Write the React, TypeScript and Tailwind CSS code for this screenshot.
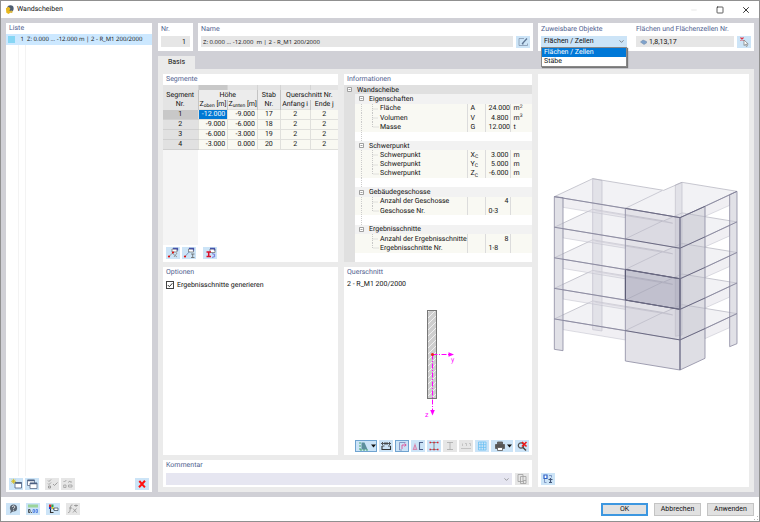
import { useState } from "react";
import type { ReactNode } from "react";
import { ChevronDown, Minus, Square, X } from "lucide-react";

interface Segment {
  nr: number;
  top: string;
  bottom: string;
  member: number;
}

interface InfoRow {
  kind: "root" | "group" | "item" | "gap";
  label?: string;
  symbol?: ReactNode;
  value?: string;
  left?: boolean;
  unit?: ReactNode;
  last?: boolean;
}

const SEGMENTS: Segment[] = [
  { nr: 1, top: "-12.000", bottom: "-9.000", member: 17 },
  { nr: 2, top: "-9.000", bottom: "-6.000", member: 18 },
  { nr: 3, top: "-6.000", bottom: "-3.000", member: 19 },
  { nr: 4, top: "-3.000", bottom: "0.000", member: 20 },
];

const sub = (base: string, index: string) => (
  <>
    {base}
    <sub className="text-[5px]">{index}</sub>
  </>
);

const sup = (base: string, index: string) => (
  <>
    {base}
    <sup className="text-[5px]">{index}</sup>
  </>
);

const INFO: InfoRow[] = [
  { kind: "root", label: "Wandscheibe" },
  { kind: "group", label: "Eigenschaften" },
  { kind: "item", label: "Fläche", symbol: "A", value: "24.000", unit: sup("m", "2") },
  { kind: "item", label: "Volumen", symbol: "V", value: "4.800", unit: sup("m", "3") },
  { kind: "item", label: "Masse", symbol: "G", value: "12.000", unit: "t", last: true },
  { kind: "gap" },
  { kind: "group", label: "Schwerpunkt" },
  { kind: "item", label: "Schwerpunkt", symbol: sub("X", "C"), value: "3.000", unit: "m" },
  { kind: "item", label: "Schwerpunkt", symbol: sub("Y", "C"), value: "5.000", unit: "m" },
  { kind: "item", label: "Schwerpunkt", symbol: sub("Z", "C"), value: "-6.000", unit: "m", last: true },
  { kind: "gap" },
  { kind: "group", label: "Gebäudegeschosse" },
  { kind: "item", label: "Anzahl der Geschosse", value: "4" },
  { kind: "item", label: "Geschosse Nr.", value: "0-3", left: true, last: true },
  { kind: "gap" },
  { kind: "group", label: "Ergebnisschnitte" },
  { kind: "item", label: "Anzahl der Ergebnisschnitte", value: "8" },
  { kind: "item", label: "Ergebnisschnitte Nr.", value: "1-8", left: true, last: true },
  { kind: "gap" },
];

const BLUE = "bg-[#cce4f7]";
const GREY = "bg-[#e6e6e6]";

function Tool({ label, off, wide, active, children }: {
  label: string;
  off?: boolean;
  wide?: boolean;
  active?: boolean;
  children: ReactNode;
}) {
  return (
    <button
      type="button"
      aria-label={label}
      disabled={off}
      className={`flex h-3 shrink-0 items-center justify-center ${wide ? "w-[22px]" : "w-[14px]"} ${off ? GREY : BLUE} ${
        active ? "border border-[#6fa3d0]" : ""
      }`}
    >
      <svg viewBox="0 0 14 12" className="h-3 w-[14px] shrink-0" fill="none" stroke="#444" strokeWidth="0.8">
        {children}
      </svg>
      {wide && (
        <svg viewBox="0 0 5 4" className="h-1 w-[5px] shrink-0">
          <path d="M0 0.500h5L2.500 3.500z" fill="#111" />
        </svg>
      )}
    </button>
  );
}

function Title({ children, htmlFor }: { children: ReactNode; htmlFor?: string }) {
  const style = "block h-[11px] px-[3px] leading-[11px] text-[#50618f]";
  return htmlFor ? (
    <label htmlFor={htmlFor} className={style}>{children}</label>
  ) : (
    <h2 className={style}>{children}</h2>
  );
}

function ObjectList() {
  return (
    <section className="flex w-[146px] shrink-0 flex-col bg-white">
      <Title>Liste</Title>
      <div className="flex h-[11px] items-center bg-[#cce8ff] font-['Open_Sans',sans-serif] text-[6px]">
        <span className="ml-[2px] size-[7px] shrink-0 bg-[#86d6f4]" />
        <span className="w-[9px] shrink-0 text-right">1</span>
        <span className="ml-[3px] whitespace-nowrap">Z: 0.000 ... -12.000 m | 2 - R_M1 200/2000</span>
      </div>
      <div className="grid flex-1 grid-cols-[13px_7px_1fr]">
        <span className="border-r border-[#f3f3f3]" />
        <span className="border-r border-[#f3f3f3]" />
      </div>
      <div className="flex gap-[2px] px-[3px] pt-[2px] pb-[2px]">
        <Tool label="Neu">
          <path d="M6 4.500h6.500v5.500h-6.500z" fill="#fff" stroke="#4c6083" />
          <path d="M6 5h6.500" stroke="#4c6083" strokeWidth="1.600" />
          <path d="M4.500 0.800v5M2 3.300h5M2.700 1.500l3.600 3.600M6.300 1.500l-3.600 3.600" stroke="#d6bd1c" />
        </Tool>
        <Tool label="Kopieren">
          <path d="M2.500 2h7v5.500h-7z" fill="#fff" stroke="#5b6d8c" />
          <path d="M2.500 2.500h7" stroke="#4c6083" strokeWidth="1.500" />
          <path d="M5 5h7v5.500h-7z" fill="#fff" stroke="#5b6d8c" />
          <path d="M5 5.500h7" stroke="#4c6083" strokeWidth="1.500" />
        </Tool>
        <span className="w-[2px]" />
        <Tool label="Alle auswählen" off>
          <path d="M3 2.500l1 1 2-2M3 5.500l1 1 2-2M3.500 8h2v2h-2zM8 6l1.500 1.500 3-3" stroke="#8d8d8d" />
        </Tool>
        <Tool label="Auswahl umkehren" off>
          <path d="M2.500 3l1 1 1.800-2M2.700 7h2.300v2.500h-2.300zM7 4.500l2-1.500v1h2M7.500 7h3.500v2h-3.500z" stroke="#a0a0a0" />
        </Tool>
        <span className="flex-1" />
        <Tool label="Löschen">
          <path d="M4.300 3l5.600 6.300M10 2.800l-6 6.500" stroke="#ff1010" strokeWidth="2" />
        </Tool>
      </div>
    </section>
  );
}

function SegmentPanel() {
  return (
    <section className="flex h-[188px] flex-col bg-white">
      <Title>Segmente</Title>
      <table className="h-[61px] w-full table-fixed border-collapse text-center leading-[9px]">
        <colgroup>
          <col className="w-[20%]" />
          <col className="w-[17%]" />
          <col className="w-[17%]" />
          <col className="w-[13%]" />
          <col className="w-[17%]" />
          <col className="w-[16%]" />
        </colgroup>
        <thead className="bg-[#ececec]">
          <tr className="h-[5px] leading-[4px]">
            <td className="bg-[#e4e4e4]" />
            <td className="border border-y-0 border-[#d4d4d4] bg-[#c8c8c8]" />
            <td className="border-r border-[#d4d4d4] bg-[#e4e4e4]" />
            <td className="border-r border-[#d4d4d4] bg-[#e4e4e4]" />
            <td className="border-r border-[#d4d4d4] bg-[#e4e4e4]" />
            <td className="bg-[#e4e4e4]" />
          </tr>
          <tr className="h-[10px]">
            <th rowSpan={2} className="bg-[#e4e4e4] p-0 font-normal">Segment<br />Nr.</th>
            <th colSpan={2} className="border-x border-[#c4c4c4] p-0 font-normal">Höhe</th>
            <th className="border-r border-[#c4c4c4] p-0 font-normal">Stab</th>
            <th colSpan={2} className="p-0 font-normal">Querschnitt Nr.</th>
          </tr>
          <tr className="h-[9px] whitespace-nowrap">
            <th className="border-x border-[#c4c4c4] p-0 font-normal">
              <span className="block h-[9px]">{sub("Z", "oben")} [m]</span>
            </th>
            <th className="border-r border-[#c4c4c4] p-0 font-normal">
              <span className="block h-[9px]">{sub("Z", "unten")} [m]</span>
            </th>
            <th className="border-r border-[#c4c4c4] p-0 font-normal">Nr.</th>
            <th className="border-r border-[#c4c4c4] p-0 font-normal">Anfang i</th>
            <th className="p-0 font-normal">Ende j</th>
          </tr>
        </thead>
        <tbody className="bg-[#f9f9f2]">
          {SEGMENTS.map((s, i) => (
            <tr key={s.nr} className="h-[9px]">
              <td className={`border-b border-[#d0d0d0] p-0 ${i === 0 ? "bg-[#c8c8c8]" : "bg-[#e1e1e1]"}`}>{s.nr}</td>
              <td className={`border border-[#e0e0dc] p-0 pr-[2px] text-right ${i === 0 ? "bg-[#0078d4] text-white" : ""}`}>
                {s.top}
              </td>
              <td className="border border-[#e0e0dc] p-0 pr-[2px] text-right">{s.bottom}</td>
              <td className="border border-[#e0e0dc] p-0">{s.member}</td>
              <td className="border border-[#e0e0dc] p-0">2</td>
              <td className="border-b border-[#e0e0dc] p-0">2</td>
            </tr>
          ))}
        </tbody>
      </table>
      <div className="w-1/5 flex-1 bg-[#f5f5f5]" />
      <div className="flex gap-[2px] px-[3px] pt-[2px] pb-[3px]">
        <Tool label="Segment wählen">
          <path d="M6 2h5v3h-5z" fill="#fff" stroke="#777" />
          <path d="M7 1.500h4.500v2" stroke="#4552a8" strokeWidth="1.300" />
          <path d="M3 9.500l5-5M6 6l5 4M11 6l-3 4" stroke="#888" />
          <circle cx="3" cy="9.500" r="1.100" fill="#d11" stroke="none" />
          <circle cx="7" cy="5.500" r="1.100" fill="#d11" stroke="none" />
        </Tool>
        <Tool label="Querschnitt wählen">
          <path d="M6.500 2h5v3h-5z" fill="#fff" stroke="#777" />
          <path d="M7 1.500h4.500v2" stroke="#4552a8" strokeWidth="1.300" />
          <path d="M3 9.500l4.500-5" stroke="#6a87b0" />
          <circle cx="3" cy="9.500" r="1.100" fill="#d11" stroke="none" />
          <path d="M9 7h3.500M9 10.500h3.500M10.700 7v3.500" stroke="#666" />
        </Tool>
        <span className="w-[3px]" />
        <Tool label="Querschnitt zuordnen">
          <path d="M7 2h5v3.500h-5z" fill="#fff" stroke="#777" />
          <path d="M7 1.500h4.500v2" stroke="#4552a8" strokeWidth="1.300" />
          <path d="M3.500 5h4.500M3.500 9.500h4.500M5.700 5v4.500" stroke="#d8102c" strokeWidth="1.500" />
          <path d="M9 6.500l2.500 1v2l-2.500 1" stroke="#7f86e0" strokeWidth="1.300" />
        </Tool>
      </div>
    </section>
  );
}

function Expander() {
  return (
    <svg viewBox="0 0 5 5" className="size-[5px] bg-white">
      <path d="M0.500 0.500h4v4h-4zM1.500 2.500h2" fill="none" stroke="#777" strokeWidth="0.700" />
    </svg>
  );
}

function InfoPanel() {
  return (
    <section className="h-[188px] bg-white">
      <Title>Informationen</Title>
      <table className="h-[177px] w-full table-fixed border-collapse leading-[8px]">
        <colgroup>
          <col className="w-[11px]" />
          <col className="w-[13px]" />
          <col />
          <col className="w-[18px]" />
          <col className="w-[25px]" />
          <col className="w-[21px]" />
        </colgroup>
        <tbody>
          {INFO.map((row, i) => {
            if (row.kind === "root") {
              return (
                <tr key={i} className="h-[9px] bg-[#e0e0e0]">
                  <td className="p-0 pl-[3px]"><Expander /></td>
                  <td colSpan={5} className="p-0 pl-[2px]">{row.label}</td>
                </tr>
              );
            }
            const trunk = (
              <td className="p-0">
                {i < 15 && <span className="block h-[9px] w-[7px] border-r border-dotted border-[#ccc]" />}
              </td>
            );
            if (row.kind === "gap") {
              return (
                <tr key={i} className="h-[9px]">
                  <td className="bg-[#e0e0e0] p-0" />
                  {trunk}
                  <td colSpan={4} />
                </tr>
              );
            }
            if (row.kind === "group") {
              return (
                <tr key={i} className="h-[9px] bg-[#f2f2f2]">
                  <td className="bg-[#e0e0e0] p-0" />
                  <td className="p-0 pl-1"><Expander /></td>
                  <td colSpan={4} className="p-0 pl-px">{row.label}</td>
                </tr>
              );
            }
            return (
              <tr key={i} className="h-[9px] bg-[#f9f9f3] whitespace-nowrap">
                <td className="bg-[#e0e0e0] p-0" />
                {trunk}
                <td className="p-0">
                  <div className="flex items-center">
                    <svg viewBox="0 0 8 9" className="ml-1 h-[9px] w-2 shrink-0" fill="none" stroke="#bbb" strokeWidth="0.800">
                      <path d={row.last ? "M0.500 0v5h6" : "M0.500 0v9M0.500 5h6"} strokeDasharray="1 1" />
                    </svg>
                    {row.label}
                  </div>
                </td>
                <td className="border-l border-[#dcdcdc] p-0 pl-[2px]">
                  <span className="block h-[8px]">{row.symbol}</span>
                </td>
                <td className={`border-x border-[#dcdcdc] p-0 px-[2px] ${row.left ? "text-left" : "text-right"}`}>{row.value}</td>
                <td className="p-0 pl-[2px]">
                  <span className="block h-[8px]">{row.unit}</span>
                </td>
              </tr>
            );
          })}
        </tbody>
      </table>
    </section>
  );
}

function OptionsPanel() {
  return (
    <section className="h-[188px] bg-white">
      <Title>Optionen</Title>
      <label className="flex h-[14px] items-center gap-[3px] px-[3px]">
        <span className="relative flex size-2">
          <input type="checkbox" defaultChecked className="peer size-2 appearance-none border border-[#444] bg-white" />
          <svg viewBox="0 0 8 8" className="pointer-events-none absolute inset-0 hidden size-2 peer-checked:block">
            <path d="M1.800 4l1.600 1.700 3-3.500" fill="none" stroke="#222" strokeWidth="0.900" />
          </svg>
        </span>
        Ergebnisschnitte generieren
      </label>
    </section>
  );
}

function SectionDrawing() {
  return (
    <svg viewBox="0 0 56 120" className="h-[120px] w-14">
      <defs>
        <pattern id="hatch" width="6" height="6" patternUnits="userSpaceOnUse">
          <path d="M-1 7L7 -1M-4 4L4 -4M2 10L10 2" stroke="#f4f4f4" strokeWidth="0.900" />
        </pattern>
      </defs>
      <rect x="17.500" y="4.500" width="9" height="88" fill="#cecece" />
      <rect x="17.500" y="4.500" width="9" height="88" fill="url(#hatch)" stroke="#777" />
      <path d="M22.500 48.500H40M22.500 48.500V105" stroke="#f0f" strokeDasharray="5 1.500 1 1.500" fill="none" />
      <path d="M38.500 46.200v4.600l5.500-2.300zM20.200 104h4.600l-2.300 5.500z" fill="#f0f" />
      <circle cx="22.500" cy="48.500" r="1.600" fill="#f02020" />
      <text x="41" y="56" fontSize="7" fill="#f0f">y</text>
      <text x="15" y="111" fontSize="7" fill="#f0f">z</text>
    </svg>
  );
}

function CrossSectionPanel() {
  return (
    <section className="flex h-[188px] flex-col bg-white">
      <Title>Querschnitt</Title>
      <p className="h-[14px] px-[3px] leading-[13px]">2 - R_M1 200/2000</p>
      <div className="flex flex-1 items-center justify-center">
        <SectionDrawing />
      </div>
      <div className="flex justify-end gap-[2px] px-[3px] pb-[3px]">
        <Tool label="Darstellung" wide active>
          <path d="M4.500 2.500h3l3 7h-6z" fill="#5c8f9c" stroke="none" />
          <path d="M3 2v8M3 10h9" stroke="#2c9a50" strokeDasharray="2 1" />
        </Tool>
        <Tool label="Bemaßung">
          <path d="M3 6v3.500h8.500v-3.500" stroke="#333" strokeWidth="1.100" />
          <path d="M3 6h2.500M9 6h2.500" stroke="#333" />
          <path d="M2.500 3.500h9M4 2L2.500 3.500 4 5M10 2l1.500 1.500L10 5M6 2v3M8 2v3" stroke="#333" />
        </Tool>
        <Tool label="Achsen" active>
          <path d="M10.500 2.500h-6v7.500h2.500" stroke="#7587b8" />
          <path d="M7 9V5h4M9.500 3.500l1.700 1.500L9.500 6.500" stroke="#e0408c" />
        </Tool>
        <Tool label="Hauptachsen">
          <path d="M12 2.500H8.500v7h3.500" stroke="#4c5f88" strokeWidth="1.100" />
          <path d="M2 9.500l2-4.500 2 4.500zM4 3.500v6" stroke="#d878a4" />
        </Tool>
        <Tool label="Spannungspunkte">
          <path d="M3 2.500h8M3 9.500h8M7 2.500v7" stroke="#777" />
          <path d="M2.500 2.500h1.500M10 2.500h1.500M2.500 9.500h1.500M10 9.500h1.500M6.300 2.500h1.500M6.300 9.500h1.500" stroke="#e02030" strokeWidth="1.400" />
        </Tool>
        <Tool label="Profil" off>
          <path d="M4 2.500h6M4 9.500h6M7 2.500v7" stroke="#aaa" />
        </Tool>
        <Tool label="Nummerierung" off>
          <path d="M2 8.500h10M3.500 3.500v2.500M6 3.500h1.500v2.500M10 3.500h1.500v2.500" stroke="#bbb" />
        </Tool>
        <Tool label="Raster">
          <path d="M3.500 2h7.500v8h-7.500zM3.500 4.700h7.500M3.500 7.400h7.500M6 2v8M8.500 2v8" stroke="#6cc2f4" />
        </Tool>
        <Tool label="Drucken" wide>
          <path d="M2.500 4.500h9v4h-9z" fill="#555" stroke="#555" />
          <path d="M4.500 2h5v2.500h-5z" fill="#666" stroke="#555" />
          <path d="M4.500 7.500h5v3h-5z" fill="#fff" stroke="#555" />
        </Tool>
        <Tool label="Zoom zurücksetzen">
          <circle cx="6" cy="5.500" r="2.700" stroke="#555" strokeWidth="1.200" />
          <path d="M8 7.500l3 3" stroke="#444" strokeWidth="1.400" />
          <path d="M7 2l4.500 4.500M11.500 2L7 6.500" stroke="#f01818" strokeWidth="1.600" />
        </Tool>
      </div>
    </section>
  );
}

const LEVELS = [4, 3, 2, 1, 0];

function Building() {
  return (
    <svg viewBox="20 30 564 594" className="h-[198px] w-[188px]" strokeLinejoin="round">
      {/* rear columns */}
      <g fill="#c4c3d0" fillOpacity="0.400" stroke="#b3b2bf" strokeWidth="2">
        <path d="M142 41L170 46V498L142 494z" />
        <path d="M390 60L410 52V510L390 514z" />
      </g>
      {LEVELS.map((k) => (
        <g key={k} transform={`translate(0 ${k * 91.7})`}>
          {/* beams under the slab */}
          <g fill="#dddce4" fillOpacity="0.450" stroke="#bdbcc8" strokeWidth="1.500">
            <path d="M53 99L240 130V158L53 127z" />
            <path d="M479 124L553 89V121L479 154z" />
          </g>
          <path d="M27 95L142 41L355 76L410 52L575 79L404 158z" fill="#d9d8e0" fillOpacity="0.330" stroke="#aeadba" strokeWidth="2" />
          {k > 0 && <path d="M150 45L382 83L355 76" fill="none" stroke="#c2c1cc" strokeWidth="2" />}
          <path d="M240 130L350 77" stroke="#b7b6c3" strokeWidth="2" />
        </g>
      ))}
      {/* wall panels */}
      <path d="M240 130L404 158V615L240 588z" fill="#b8b7c6" fillOpacity="0.400" stroke="#8f8ea3" strokeWidth="2.500" />
      <path d="M404 158L479 124V580L404 615z" fill="#b4b3c2" fillOpacity="0.440" stroke="#8f8ea3" strokeWidth="2.500" />
      <path d="M240 313L404 341V433L240 405z" fill="#85869e" fillOpacity="0.300" stroke="#50506a" strokeWidth="3" />
      {/* front columns */}
      <g fill="#c4c3d0" fillOpacity="0.500" stroke="#8f8ea3" strokeWidth="2.500">
        <path d="M27 95L53 98V557L27 553z" />
        <path d="M553 89L575 79V536L553 545z" />
      </g>
      {LEVELS.map((k) => (
        <g key={k} transform={`translate(0 ${k * 91.7})`} fill="none">
          <path d="M27 95L240 130M479 124L575 79" stroke="#83829a" strokeWidth="2.500" />
          <path d="M240 130L404 158L479 124" stroke="#6b6a83" strokeWidth="3" />
        </g>
      ))}
      <path d="M404 158V615" stroke="#77768d" strokeWidth="3" />
    </svg>
  );
}

function AssignPanel() {
  const [target, setTarget] = useState("Flächen / Zellen");
  return (
    <section className="flex w-[216px] shrink-0 gap-[9px] bg-white px-[3px]">
      <div className="w-[86px] shrink-0">
        <label htmlFor="target" className="block h-[13px] leading-[12px] text-[#50618f]">Zuweisbare Objekte</label>
        <div className="relative">
          <select
            id="target"
            value={target}
            onChange={(e) => setTarget(e.target.value)}
            className="block h-[11px] w-full appearance-none bg-[#cce4f7] px-[3px] leading-[11px]"
          >
            <option>Flächen / Zellen</option>
            <option>Stäbe</option>
          </select>
          <ChevronDown size={7} className="pointer-events-none absolute top-[2px] right-[2px] text-[#444]" />
          <ul className="absolute top-[11px] left-0 z-10 w-full border border-[#888] bg-white shadow-[1px_1px_1px_#777]">
            <li className="h-[9px] bg-[#0078d7] px-[2px] leading-[9px] text-white">Flächen / Zellen</li>
            <li className="h-[9px] px-[2px] leading-[9px]">Stäbe</li>
          </ul>
        </div>
      </div>
      <div className="min-w-0 flex-1">
        <label htmlFor="areas" className="block h-[13px] leading-[12px] whitespace-nowrap text-[#50618f]">
          Flächen und Flächenzellen Nr.
        </label>
        <div className="flex gap-[3px]">
          <div className="flex h-[11px] min-w-0 flex-1 items-center gap-[2px] bg-[#e6e6e6] pl-1">
            <svg viewBox="0 0 7 6" className="h-[6px] w-[7px] shrink-0">
              <path d="M0.500 3L3 1l3.500 1.500v1.500L4 5.500z" fill="#7fa3cc" stroke="#6d87a8" strokeWidth="0.500" />
            </svg>
            <input id="areas" defaultValue="1,8,13,17" className="h-[11px] min-w-0 flex-1 bg-transparent outline-none" />
          </div>
          <Tool label="Flächen wählen">
            <path d="M3.500 1.500l3 3M6.500 1.500l-3 3" stroke="#e03040" strokeWidth="1.100" />
            <path d="M7 4v5.500l1.400-1.200 1 2.200 1-0.500-1-2h1.800z" fill="#fff" stroke="#777" strokeWidth="0.700" />
          </Tool>
        </div>
      </div>
    </section>
  );
}

function Footer() {
  const button = "h-[13px] w-[47px] bg-[#e1e1e1]";
  return (
    <footer className="relative flex h-6 items-center gap-[6px] bg-white px-[5px]">
      <Tool label="Hilfe">
        <circle cx="7.500" cy="5" r="3.600" fill="#5a6572" stroke="none" />
        <path d="M4 10.500l1-3h3z" fill="#5a6572" stroke="none" />
        <path d="M6.300 4a1.200 1.200 0 1 1 1.700 1.100l-.5.500v.6M7.500 7v.7" stroke="#fff" />
      </Tool>
      <Tool label="Einheiten">
        <path d="M2 1.500h10v3h-10z" fill="#9bd49a" stroke="none" />
        <path d="M2.500 6.500h1.500v3h-1.500zM5.500 9v1" stroke="#333" />
        <path d="M7 6.500h1.500v3h-1.500zM10 6.500h1.500v3h-1.500z" stroke="#4a78e0" />
      </Tool>
      <Tool label="Anzeige">
        <path d="M3 1.500h2.500v2.500h-2.500z" fill="#d22" stroke="none" />
        <path d="M5.500 1.500h2v2.500h-2z" fill="#2a5" stroke="none" />
        <path d="M3 4h2.500v2h-2.500z" fill="#24c" stroke="none" />
        <path d="M5.500 4h2v2h-2z" fill="#dc2" stroke="none" />
        <path d="M4.500 6v4M4.500 9.500h3M7 6h1" stroke="#333" strokeWidth="1.100" />
        <path d="M8 5h4v2.500h-4z" fill="#fff" stroke="#456" />
      </Tool>
      <Tool label="Formel" off>
        <path d="M6.500 2c-2-.5-2 2-2.300 4s-.5 4-2 3.500M3 5h3M7 5.500l3.500 4M10.500 5.500l-3.500 4M8 2.500h4M10 1.500v2.500" stroke="#909090" />
      </Tool>
      <span className="flex-1" />
      <button type="button" className={`${button} border-2 border-[#3d97e0]`}>OK</button>
      <button type="button" className={`${button} border border-[#c4c4c4]`}>Abbrechen</button>
      <button type="button" className={`${button} border border-[#c4c4c4]`}>Anwenden</button>
      <svg viewBox="0 0 6 6" className="absolute right-0 bottom-0 size-[6px]">
        <path d="M4 1h1v1h-1zM4 4h1v1h-1zM1 4h1v1h-1z" fill="#b5b5b5" />
      </svg>
    </footer>
  );
}

export default function App() {
  return (
    <div className="flex min-h-screen flex-col border border-[#909090] bg-[#d0d0d6] font-[Roboto,'Open_Sans',sans-serif] text-[7px] leading-[9px] text-[#111] [text-rendering:geometricPrecision]">
      <header className="flex h-[17px] items-center bg-white pl-1">
        <svg viewBox="0 0 10 10" className="mr-[3px] size-[9px]">
          <circle cx="6" cy="4" r="3.600" fill="#4d5d72" />
          <path d="M1 3.500l3-1.500 2 2-1 2 1.500 2-2.500 2-2.500-1.500z" fill="#e9b91e" />
          <circle cx="7" cy="7.500" r="1.500" fill="#d8b640" />
        </svg>
        <h1 className="flex-1">Wandscheiben</h1>
        <button type="button" aria-label="Minimieren" disabled className="flex w-[26px] justify-center text-[#ddd]">
          <Minus size={8} />
        </button>
        <button type="button" aria-label="Maximieren" className="flex w-[26px] justify-center"><Square size={8} /></button>
        <button type="button" aria-label="Schließen" className="flex w-[26px] justify-center"><X size={10} /></button>
      </header>

      <main className="flex flex-1 gap-[6px] p-[5px]">
        <ObjectList />
        <div className="flex min-w-0 flex-1 flex-col">
          <div className="flex h-7 gap-[5px]">
            <section className="w-[35px] shrink-0 bg-white px-[3px]">
              <label htmlFor="nr" className="block h-[13px] leading-[12px] text-[#50618f]">Nr.</label>
              <input id="nr" defaultValue="1" className="block h-[11px] w-full bg-[#e6e6e6] pr-1 text-right outline-none" />
            </section>
            <section className="min-w-0 flex-1 bg-white px-[3px]">
              <label htmlFor="name" className="block h-[13px] leading-[12px] text-[#50618f]">Name</label>
              <div className="flex gap-[3px]">
                <input
                  id="name"
                  defaultValue="Z: 0.000 ... -12.000  m | 2 - R_M1 200/2000"
                  className="h-[11px] min-w-0 flex-1 bg-[#e6e6e6] px-[2px] font-['Open_Sans',sans-serif] text-[6px] outline-none"
                />
                <Tool label="Name bearbeiten">
                  <path d="M8 2.500h-5v7h8.500v-2" stroke="#8497ae" />
                  <path d="M6 8l5-5.500M6 8h1.500" stroke="#5b7391" strokeWidth="1.200" />
                </Tool>
              </div>
            </section>
            <AssignPanel />
          </div>

          <div role="tablist" className="mt-[5px] flex">
            <button type="button" role="tab" aria-selected="true" className="h-[13px] w-[37px] bg-[#ebebeb]">Basis</button>
          </div>

          <div className="flex flex-1 gap-[6px] bg-[#ebebeb] p-[5px]">
            <div className="flex min-w-0 flex-1 flex-col gap-[5px]">
              <div className="grid grid-cols-[175fr_188fr] gap-x-[6px] gap-y-[5px]">
                <SegmentPanel />
                <InfoPanel />
                <OptionsPanel />
                <CrossSectionPanel />
              </div>
              <section className="flex-1 bg-white pb-[2px]">
                <Title htmlFor="comment">Kommentar</Title>
                <div className="flex gap-[3px] px-[3px] pt-[2px]">
                  <div className="relative flex-1">
                    <select id="comment" className="block h-3 w-full appearance-none bg-[#e6e6f1]" />
                    <ChevronDown size={7} className="pointer-events-none absolute top-[3px] right-[2px] text-[#666]" />
                  </div>
                  <Tool label="Kommentare" off>
                    <path d="M3 1.500h5v7h-5zM5.500 3.500h5.500v7h-5.500z" fill="#e6e6e6" stroke="#a0a0a0" />
                    <path d="M8.500 10.500v-3h2.500" stroke="#a0a0a0" />
                  </Tool>
                </div>
              </section>
            </div>
            <section className="flex w-[211px] shrink-0 flex-col bg-white">
              <div className="flex flex-1 items-center justify-center pl-1">
                <Building />
              </div>
              <div className="px-[3px] pb-[2px]">
                <Tool label="Ansicht">
                  <path d="M3 2h3v3.500h-3z" fill="#fff" stroke="#2f62c8" strokeWidth="1.200" />
                  <path d="M3.500 6v3.500h2M8 2.500h2.500v2" stroke="#6b85b8" />
                  <path d="M7.500 6.500h4M9.500 5v5M8 9.500h3" stroke="#44587c" strokeWidth="1.200" />
                </Tool>
              </div>
            </section>
          </div>
        </div>
      </main>

      <Footer />
    </div>
  );
}
